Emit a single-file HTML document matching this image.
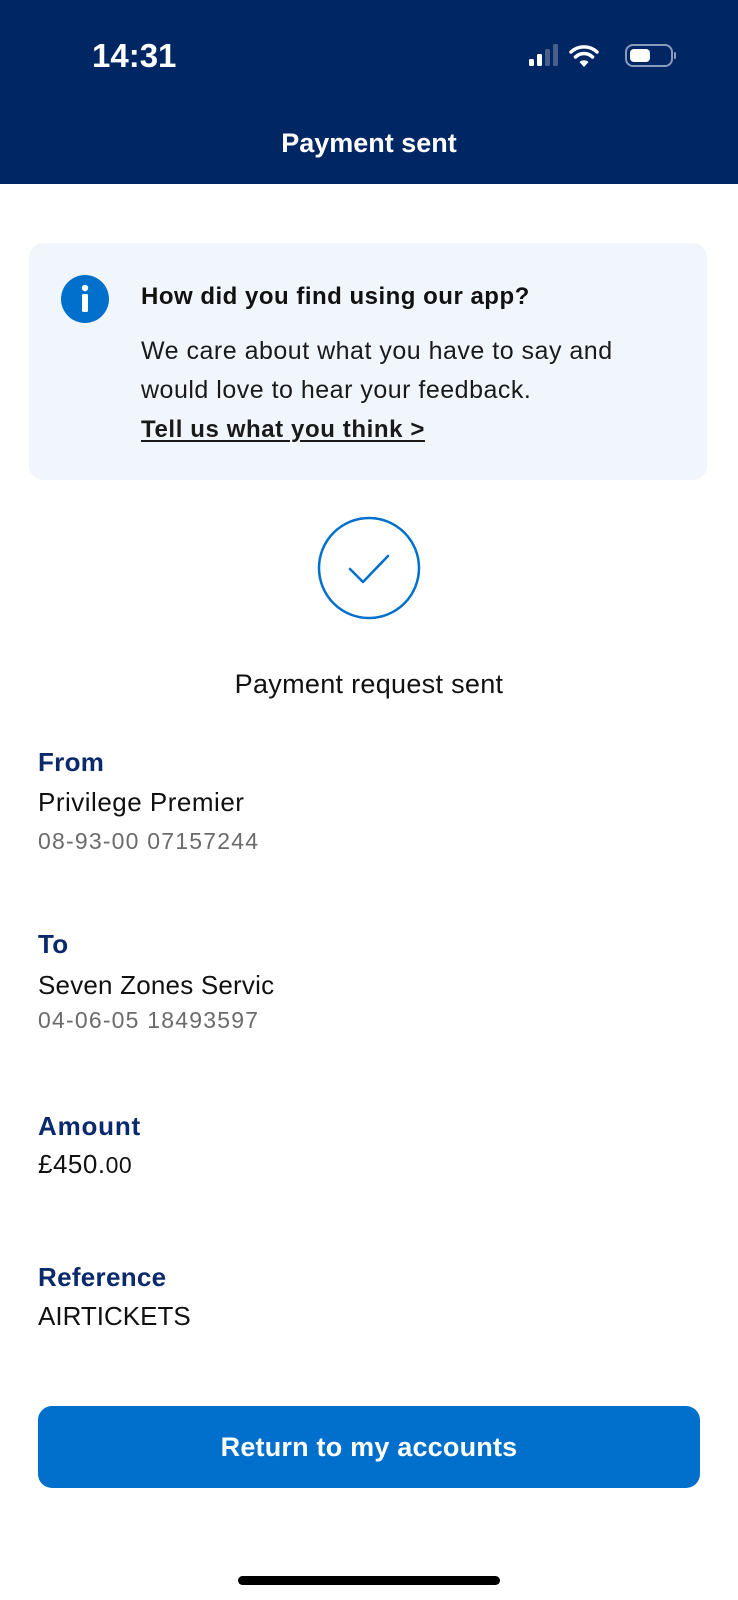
<!DOCTYPE html>
<html><head><meta charset="utf-8"><style>
*{margin:0;padding:0;box-sizing:border-box}
body{width:738px;height:1600px;background:#fff;font-family:"Liberation Sans",sans-serif;position:relative;overflow:hidden;color:#111}
.hdr{position:absolute;left:0;top:0;width:738px;height:184px;background:#002664}
.t{position:absolute;color:#fff}
.card{position:absolute;left:29px;top:243px;width:678px;height:237px;background:#f1f6fc;border-radius:14px}
.lbl{position:absolute;left:38px;font-size:26px;font-weight:bold;color:#0b2a6b;letter-spacing:0.3px}
.val{position:absolute;left:38px;font-size:26px;color:#111;letter-spacing:0.5px}
.sub{position:absolute;left:38px;font-size:23px;color:#6b6b6b;letter-spacing:1.2px}
</style></head><body>
<div class="hdr">
<div class="t" style="left:92px;top:37px;font-size:33px;font-weight:bold">14:31</div>
<svg style="position:absolute;left:528px;top:43px" width="150" height="26" viewBox="0 0 150 26">
<rect x="1" y="16" width="5" height="7" rx="1.5" fill="#fff"/>
<rect x="9" y="11" width="5" height="12" rx="1.5" fill="#fff"/>
<rect x="17" y="6" width="5" height="17" rx="1.5" fill="#4a5f8a"/>
<rect x="25" y="1" width="5" height="22" rx="1.5" fill="#4a5f8a"/>
<path d="M43 9 a19 19 0 0 1 26 0" stroke="#fff" stroke-width="3.5" fill="none" stroke-linecap="round"/>
<path d="M47.5 14 a12 12 0 0 1 17 0" stroke="#fff" stroke-width="3.5" fill="none" stroke-linecap="round"/>
<path d="M51.5 19 L56 24 L60.5 19 a6.5 6.5 0 0 0 -9 0z" fill="#fff"/>
<rect x="98" y="2" width="46" height="21" rx="7" fill="none" stroke="#8a9bbd" stroke-width="2"/>
<rect x="102" y="6" width="20" height="13" rx="4" fill="#fff"/>
<rect x="146" y="9" width="2" height="7" rx="1" fill="#8a9bbd"/>
</svg>
<div class="t" style="left:0;width:738px;text-align:center;top:128px;font-size:27px;font-weight:bold;letter-spacing:0px">Payment sent</div>
</div>
<div class="card">
<svg style="position:absolute;left:32px;top:32px" width="48" height="48" viewBox="0 0 48 48"><circle cx="24" cy="24" r="24" fill="#0070cc"/><circle cx="24" cy="13" r="3.2" fill="#fff"/><rect x="21" y="19" width="6" height="18" rx="1.5" fill="#fff"/></svg>
<div style="position:absolute;left:112px;top:40px;font-size:24px;font-weight:bold;letter-spacing:0.5px">How did you find using our app?</div>
<div style="position:absolute;left:112px;top:89px;font-size:25px;line-height:39px;letter-spacing:0.5px;color:#1a1a1a">We care about what you have to say and<br>would love to hear your feedback.<br><span style="font-weight:bold;font-size:24px;letter-spacing:0.6px;text-decoration:underline;text-underline-offset:3px">Tell us what you think &gt;</span></div>
</div>
<svg style="position:absolute;left:317px;top:516px" width="104" height="104" viewBox="0 0 104 104"><circle cx="52" cy="52" r="50" fill="none" stroke="#0070cc" stroke-width="2.5"/><path d="M33 53 L46 66 L71 40" fill="none" stroke="#0070cc" stroke-width="2.5" stroke-linecap="round" stroke-linejoin="round"/></svg>
<div style="position:absolute;left:0;width:738px;text-align:center;top:669px;font-size:27px;letter-spacing:0.3px">Payment request sent</div>
<div class="lbl" style="top:747px">From</div>
<div class="val" style="top:787px">Privilege Premier</div>
<div class="sub" style="top:828px">08-93-00 07157244</div>
<div class="lbl" style="top:929px">To</div>
<div class="val" style="top:970px;letter-spacing:0.2px">Seven Zones Servic</div>
<div class="sub" style="top:1007px">04-06-05 18493597</div>
<div class="lbl" style="top:1111px;letter-spacing:0.8px">Amount</div>
<div class="val" style="top:1149px">£450.<span style="font-size:23px">00</span></div>
<div class="lbl" style="top:1262px">Reference</div>
<div class="val" style="top:1301px;letter-spacing:0px">AIRTICKETS</div>
<div style="position:absolute;left:38px;top:1406px;width:662px;height:82px;background:#0070cc;border-radius:14px;color:#fff;font-size:27px;font-weight:bold;text-align:center;line-height:82px;letter-spacing:0.2px">Return to my accounts</div>
<div style="position:absolute;left:238px;top:1576px;width:262px;height:9px;border-radius:5px;background:#000"></div>
</body></html>
